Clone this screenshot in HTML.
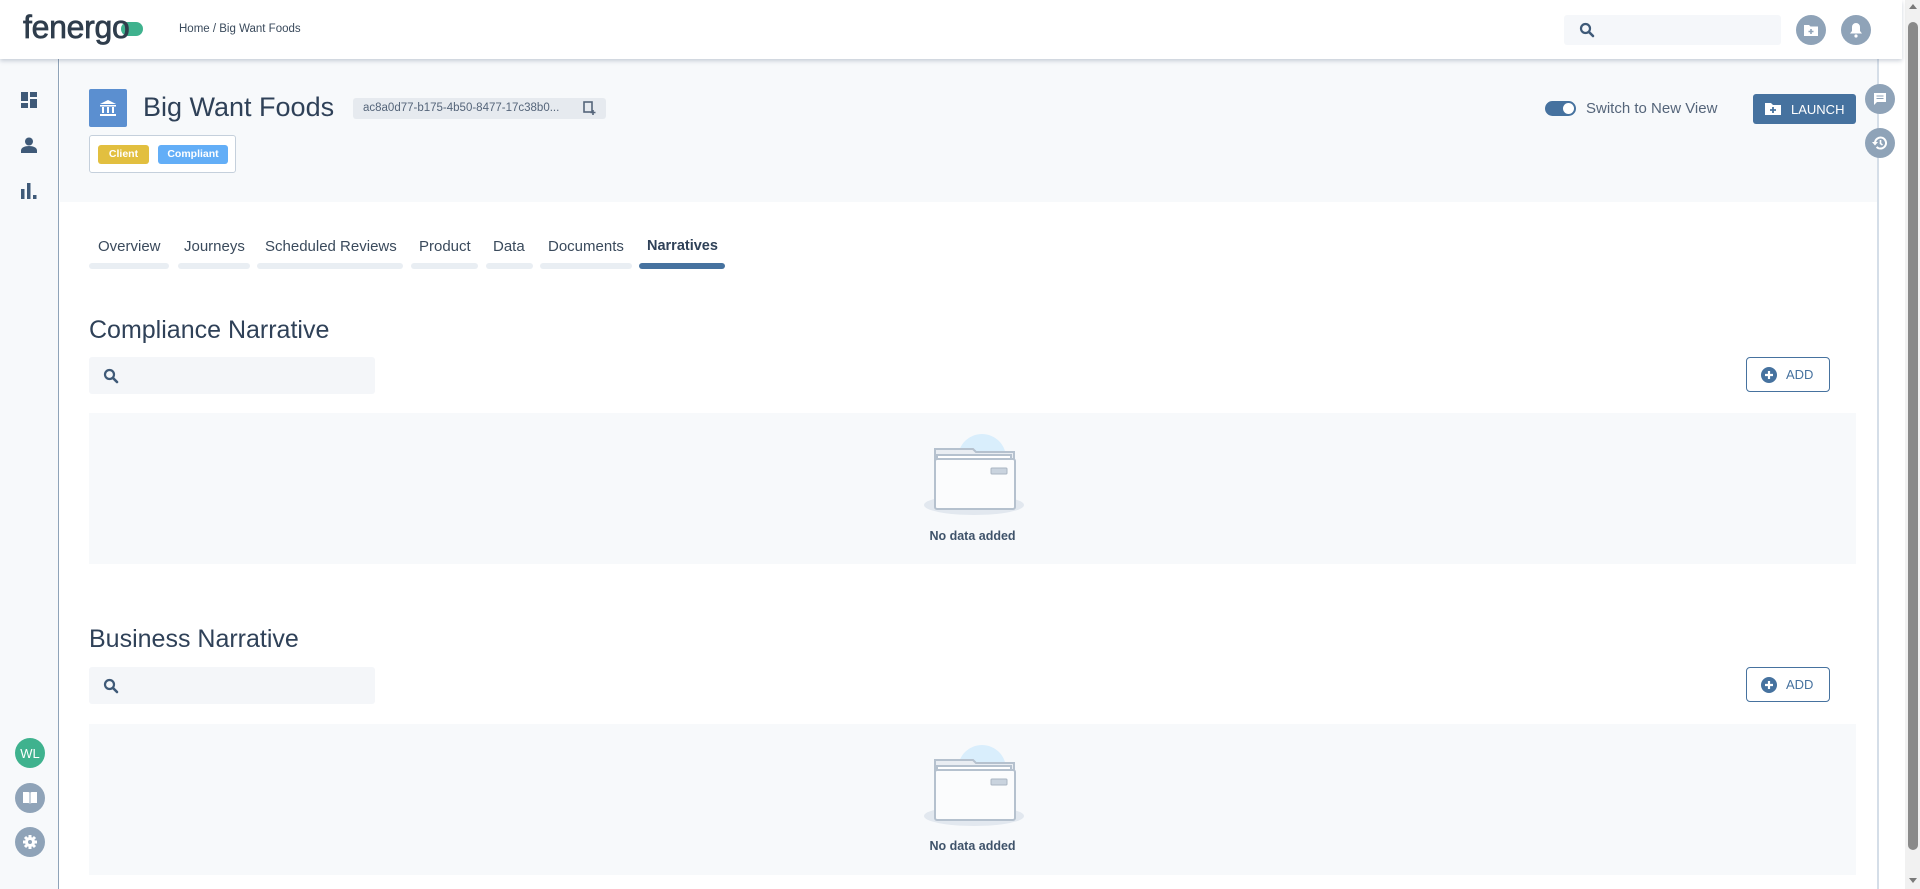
<!DOCTYPE html>
<html><head><meta charset="utf-8"><style>
*{box-sizing:border-box;margin:0;padding:0}
body{width:1920px;height:889px;overflow:hidden;background:#fff;font-family:"Liberation Sans",sans-serif;color:#3a4a5c;position:relative}
.abs{position:absolute}
.hdr{left:0;top:0;width:1902px;height:59px;background:#fff;box-shadow:0 2px 4px rgba(60,80,110,.25);z-index:5}
.side{left:0;top:59px;width:59px;height:830px;background:#f7f9fb;border-right:1px solid #8fa3b8}
.top{left:60px;top:59px;width:1817px;height:143px;background:#f7f9fb}
.rp{left:1877px;top:59px;width:25px;height:830px;background:#fff;border-left:2px solid #d5dee8}
.sb{left:1905px;top:0;width:15px;height:889px;background:#f1f1f1}
.circ{border-radius:50%;background:#8fa3b8;display:flex;align-items:center;justify-content:center}
.tab{top:238px;font-size:15px;color:#3a4a5c}
.ul{top:263px;height:6px;border-radius:3px;background:#e9eef3}
.h2{left:89px;font-size:25px;color:#2f4158}
.srch{left:89px;width:286px;height:37px;background:#f4f6f9;border-radius:3px}
.add{left:1746px;width:84px;height:35px;border:1.5px solid #46729f;border-radius:4px;color:#46729f;font-size:13px;display:flex;align-items:center;padding-left:14px;gap:9px}
.empty{left:89px;width:1767px;height:151px;background:#f7f9fb}
.nd{width:100%;text-align:center;font-size:12.5px;color:#3f536a;font-weight:bold}
</style></head><body>
<div class="abs hdr">
 <div class="abs" style="left:23px;top:9px;font-size:32px;color:#2f3d4c;letter-spacing:-0.3px;-webkit-text-stroke:0.7px #2f3d4c">fenerg<span style="position:relative">o<span style="position:absolute;left:9px;top:13px;width:22px;height:14px;border-radius:7px;background:#3fb28e;z-index:-1"></span></span></div>
 <div class="abs" style="left:179px;top:23px;font-size:11.5px;color:#3a4a5c">Home / Big Want Foods</div>
 <div class="abs" style="left:1564px;top:15px;width:217px;height:30px;background:#f5f7fa;border-radius:3px">
  <svg class="abs" style="left:15px;top:7px" width="16" height="16" viewBox="0 0 16 16"><circle cx="6.5" cy="6.5" r="4.5" fill="none" stroke="#3f5a78" stroke-width="2.2"/><path d="M10 10l4 4" stroke="#3f5a78" stroke-width="2.6" stroke-linecap="round"/></svg></div>
 <div class="abs circ" style="left:1796px;top:15px;width:30px;height:30px"><svg width="16" height="14" viewBox="0 0 16 14"><path d="M1 2h5l1.5 1.5H15V13H1z" fill="#fff"/><path d="M8 6v5M5.5 8.5h5" stroke="#8fa3b8" stroke-width="1.6"/></svg></div>
 <div class="abs circ" style="left:1841px;top:15px;width:30px;height:30px"><svg width="14" height="16" viewBox="0 0 14 16"><path d="M7 1a4 4 0 0 1 4 4v4l2 2.5H1L3 9V5a4 4 0 0 1 4-4z" fill="#fff"/><circle cx="7" cy="14" r="1.6" fill="#fff"/></svg></div>
</div>
<div class="abs side">
 <svg class="abs" style="left:21px;top:33px" width="16" height="16" viewBox="0 0 16 16" fill="#3f5a78"><rect x="0" y="0" width="7" height="9"/><rect x="9" y="0" width="7" height="5"/><rect x="0" y="11" width="7" height="5"/><rect x="9" y="7" width="7" height="9"/></svg>
 <svg class="abs" style="left:21px;top:78px" width="16" height="16" viewBox="0 0 16 16" fill="#3f5a78"><circle cx="8" cy="4.5" r="4"/><path d="M0 16v-2.5c0-3 4-4.5 8-4.5s8 1.5 8 4.5V16z"/></svg>
 <svg class="abs" style="left:21px;top:124px" width="16" height="16" viewBox="0 0 16 16" fill="#3f5a78"><rect x="0" y="6" width="3.5" height="10"/><rect x="6" y="0" width="3.5" height="16"/><rect x="12" y="12" width="3.5" height="4"/></svg>
 <div class="abs circ" style="left:15px;top:679px;width:30px;height:30px;background:#3fb28e;color:#fff;font-size:13px">WL</div>
 <div class="abs circ" style="left:15px;top:724px;width:30px;height:30px"><svg width="16" height="14" viewBox="0 0 16 14"><path d="M1 1h5.5l1.5 1v11l-1.5-1H1zM15 1H9.5L8 2v11l1.5-1H15z" fill="#fff"/><path d="M8 2v11" stroke="#8fa3b8" stroke-width="1"/></svg></div>
 <div class="abs circ" style="left:15px;top:768px;width:30px;height:30px"><svg width="16" height="16" viewBox="0 0 16 16"><circle cx="8" cy="8" r="5" fill="#fff"/><g stroke="#fff" stroke-width="3"><path d="M8 1v14M1 8h14M3 3l10 10M13 3L3 13"/></g><circle cx="8" cy="8" r="2" fill="#8fa3b8"/></svg></div>
</div>
<div class="abs top">
 <div class="abs" style="left:29px;top:30px;width:38px;height:38px;background:#5b8fd0;border-radius:2px;display:flex;align-items:center;justify-content:center"><svg width="18" height="18" viewBox="0 0 18 18" fill="#fff"><path d="M9 1l8 4H1z"/><rect x="1" y="6" width="16" height="1.5"/><rect x="3" y="8" width="2" height="6"/><rect x="8" y="8" width="2" height="6"/><rect x="13" y="8" width="2" height="6"/><rect x="1" y="15" width="16" height="2"/></svg></div>
 <div class="abs" style="left:83px;top:33px;font-size:27px;color:#2f4158">Big Want Foods</div>
 <div class="abs" style="left:293px;top:39px;width:253px;height:21px;background:#e6eaef;border-radius:3px;font-size:11.5px;color:#55657a;padding:4px 0 0 10px">ac8a0d77-b175-4b50-8477-17c38b0...<svg class="abs" style="left:230px;top:3px" width="13" height="15" viewBox="0 0 13 15"><rect x="1" y="1" width="8" height="10" fill="none" stroke="#55657a" stroke-width="1.6"/><path d="M10 9v5M7.5 11.5h5" stroke="#55657a" stroke-width="1.6"/></svg></div>
 <div class="abs" style="left:29px;top:76px;width:147px;height:38px;border:1px solid #c5d0dc;border-radius:3px;background:#fff">
  <div class="abs" style="left:8px;top:9px;width:51px;height:19px;background:#e2bf3f;border-radius:3px;color:#fff;font-size:10.5px;font-weight:bold;text-align:center;line-height:19px">Client</div>
  <div class="abs" style="left:68px;top:9px;width:70px;height:19px;background:#63aef7;border-radius:3px;color:#fff;font-size:10.5px;font-weight:bold;text-align:center;line-height:19px">Compliant</div>
 </div>
 <div class="abs" style="left:1485px;top:42px;width:31px;height:15px;border-radius:8px;background:#46729f"><div class="abs" style="left:18px;top:2px;width:11px;height:11px;border-radius:50%;background:#fff"></div></div>
 <div class="abs" style="left:1526px;top:41px;font-size:15px;color:#55657a">Switch to New View</div>
 <div class="abs" style="left:1693px;top:35px;width:103px;height:30px;background:#46729f;border-radius:3px;color:#fff;font-size:13px;display:flex;align-items:center;padding-left:11px;gap:9px"><svg width="18" height="14" viewBox="0 0 18 14"><path d="M1 1h6l2 2h8v10H1z" fill="#fff"/><path d="M9 5v6M6 8h6" stroke="#46729f" stroke-width="1.8"/></svg>LAUNCH</div>
</div>
<div class="abs rp">
 <div class="abs circ" style="left:-14px;top:25px;width:30px;height:30px"><svg width="14" height="14" viewBox="0 0 14 14"><path d="M1 1h12v9H4l-3 3z" fill="#fff"/><path d="M3.5 4h7M3.5 6.5h7" stroke="#8fa3b8" stroke-width="1"/></svg></div>
 <div class="abs circ" style="left:-14px;top:69px;width:30px;height:30px"><svg width="16" height="16" viewBox="0 0 16 16"><path d="M3 8a5.5 5.5 0 1 1 1.6 3.9" fill="none" stroke="#fff" stroke-width="2"/><path d="M0 7h6L3 10.5z" fill="#fff"/><path d="M8.5 5v3.5l2 1.5" stroke="#fff" stroke-width="1.6" fill="none"/></svg></div>
</div>
<div class="abs sb"><div class="abs" style="left:4px;top:4px;width:0;height:0;border-left:4px solid transparent;border-right:4px solid transparent;border-bottom:5px solid #7a7a7a"></div><div class="abs" style="left:3px;top:22px;width:10px;height:828px;border-radius:5px;background:#8a8a8a"></div><div class="abs" style="left:4px;top:878px;width:0;height:0;border-left:4px solid transparent;border-right:4px solid transparent;border-top:5px solid #7a7a7a"></div></div>

<div class="abs tab" style="left:98px">Overview</div><div class="abs ul" style="left:89px;width:80px"></div>
<div class="abs tab" style="left:184px">Journeys</div><div class="abs ul" style="left:178px;width:72px"></div>
<div class="abs tab" style="left:265px">Scheduled Reviews</div><div class="abs ul" style="left:257px;width:146px"></div>
<div class="abs tab" style="left:419px">Product</div><div class="abs ul" style="left:411px;width:67px"></div>
<div class="abs tab" style="left:493px">Data</div><div class="abs ul" style="left:486px;width:47px"></div>
<div class="abs tab" style="left:548px">Documents</div><div class="abs ul" style="left:540px;width:92px"></div>
<div class="abs tab" style="left:647px;font-weight:bold;color:#2f4158;font-size:14.5px">Narratives</div><div class="abs ul" style="left:639px;width:86px;background:#46729f"></div>

<div class="abs h2" style="top:316px">Compliance Narrative</div>
<div class="abs srch" style="top:357px"><svg class="abs" style="left:14px;top:11px" width="16" height="16" viewBox="0 0 16 16"><circle cx="6.5" cy="6.5" r="4.5" fill="none" stroke="#3f5a78" stroke-width="2.2"/><path d="M10 10l4 4" stroke="#3f5a78" stroke-width="2.6" stroke-linecap="round"/></svg></div>
<div class="abs add" style="top:357px"><svg width="16" height="16" viewBox="0 0 16 16"><circle cx="8" cy="8" r="8" fill="#46729f"/><path d="M8 4v8M4 8h8" stroke="#fff" stroke-width="2.2"/></svg>ADD</div>
<div class="abs empty" style="top:413px">
 <svg class="abs" style="left:834px;top:18px" width="104" height="86" viewBox="0 0 104 86"><ellipse cx="51" cy="74" rx="50" ry="10" fill="#e2e8ef"/><circle cx="59" cy="27" r="24" fill="#d9eefc"/><path d="M12 18h38l3 3h38v12H12z" fill="#e9edf2" stroke="#b5c1ce" stroke-width="2"/><rect x="14" y="24" width="74" height="10" fill="#fff" stroke="#b5c1ce" stroke-width="2"/><rect x="12" y="28" width="80" height="50" rx="2" fill="#fbfcfd" stroke="#b5c1ce" stroke-width="2"/><rect x="68" y="37" width="16" height="6" rx="1" fill="#c9d3de" stroke="#aab6c3"/></svg>
 <div class="abs nd" style="top:116px">No data added</div>
</div>

<div class="abs h2" style="top:625px">Business Narrative</div>
<div class="abs srch" style="top:667px"><svg class="abs" style="left:14px;top:11px" width="16" height="16" viewBox="0 0 16 16"><circle cx="6.5" cy="6.5" r="4.5" fill="none" stroke="#3f5a78" stroke-width="2.2"/><path d="M10 10l4 4" stroke="#3f5a78" stroke-width="2.6" stroke-linecap="round"/></svg></div>
<div class="abs add" style="top:667px"><svg width="16" height="16" viewBox="0 0 16 16"><circle cx="8" cy="8" r="8" fill="#46729f"/><path d="M8 4v8M4 8h8" stroke="#fff" stroke-width="2.2"/></svg>ADD</div>
<div class="abs empty" style="top:724px">
 <svg class="abs" style="left:834px;top:18px" width="104" height="86" viewBox="0 0 104 86"><ellipse cx="51" cy="74" rx="50" ry="10" fill="#e2e8ef"/><circle cx="59" cy="27" r="24" fill="#d9eefc"/><path d="M12 18h38l3 3h38v12H12z" fill="#e9edf2" stroke="#b5c1ce" stroke-width="2"/><rect x="14" y="24" width="74" height="10" fill="#fff" stroke="#b5c1ce" stroke-width="2"/><rect x="12" y="28" width="80" height="50" rx="2" fill="#fbfcfd" stroke="#b5c1ce" stroke-width="2"/><rect x="68" y="37" width="16" height="6" rx="1" fill="#c9d3de" stroke="#aab6c3"/></svg>
 <div class="abs nd" style="top:115px">No data added</div>
</div>
</body></html>
